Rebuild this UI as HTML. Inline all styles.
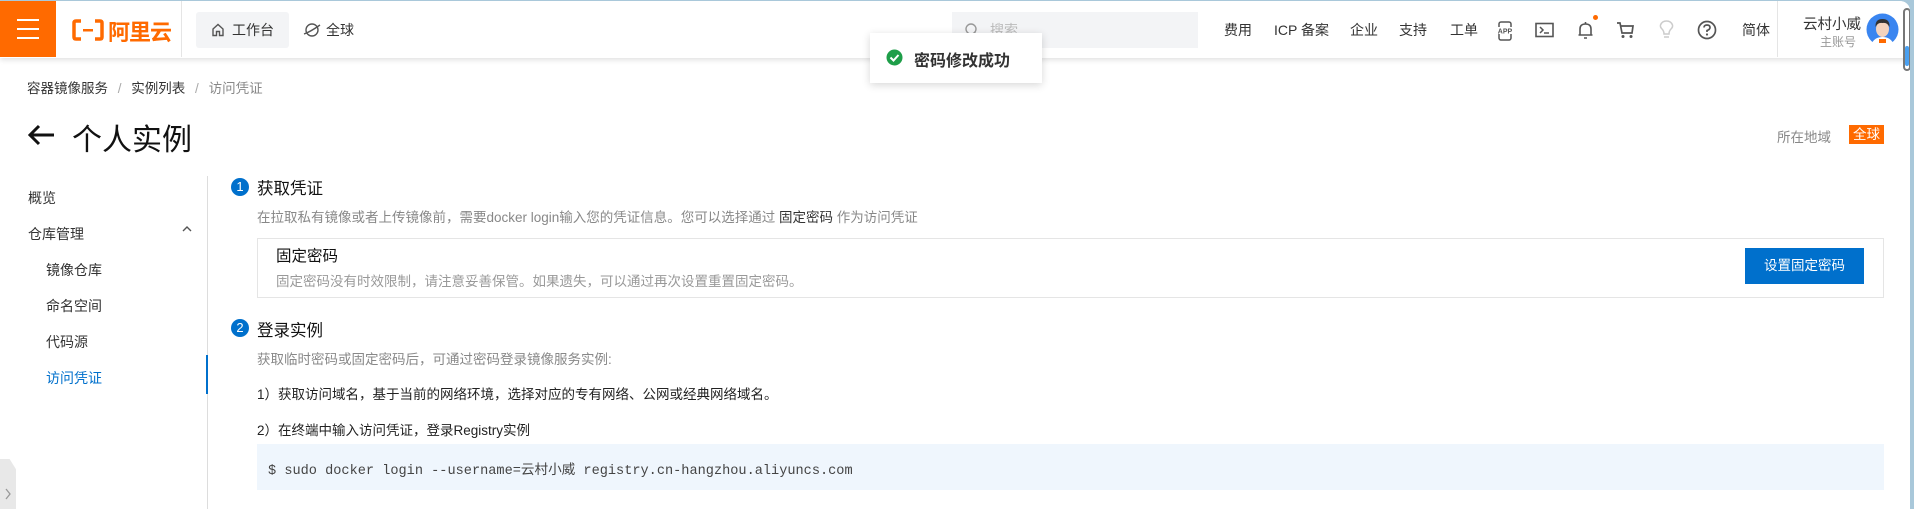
<!DOCTYPE html>
<html><head><meta charset="utf-8"><style>
*{margin:0;padding:0;box-sizing:border-box}
body{width:1914px;height:509px;overflow:hidden;background:#a9c8da;font-family:"Liberation Sans","Noto Sans CJK SC",sans-serif;color:#333;position:relative}
.win{position:absolute;left:0;top:1px;width:1910px;height:508px;background:#fff;border-top-right-radius:10px;overflow:hidden}
.a{position:absolute;white-space:nowrap}
.hdr{position:absolute;left:0;top:0;width:1910px;height:57px;background:#fff;box-shadow:0 2px 5px rgba(0,0,0,.12);z-index:2}
.nav{font-size:14px;color:#333;top:19px}
.side{font-size:14px;color:#333}
</style></head><body>
<div class="win">
<div class="hdr">
  <div class="a" style="left:0;top:0;width:56px;height:56px;background:#ff6a00"></div>
  <div class="a" style="left:17px;top:18px;width:22px;height:2px;background:#fff"></div>
  <div class="a" style="left:17px;top:27px;width:22px;height:2px;background:#fff"></div>
  <div class="a" style="left:17px;top:36px;width:22px;height:2px;background:#fff"></div>
  <svg class="a" style="left:72px;top:18px" width="32" height="22" viewBox="0 0 32 22"><path d="M9 2H4Q2 2 2 4V18Q2 20 4 20H9M23 2H28Q30 2 30 4V18Q30 20 28 20H23" stroke="#ff6a00" stroke-width="3.5" fill="none"/><rect x="11" y="10" width="10" height="2.5" fill="#ff6a00"/></svg>
  <div class="a" style="left:108px;top:14px;font-size:22px;font-weight:bold;color:#ff6a00;letter-spacing:-1px">阿里云</div>
  <div class="a" style="left:181px;top:0;width:1px;height:56px;background:#e5e5e5"></div>
  <div class="a" style="left:196px;top:11px;width:93px;height:36px;background:#f3f4f6;border-radius:3px"></div>
  <svg class="a" style="left:211px;top:22px" width="14" height="14" viewBox="0 0 14 14"><path d="M2 6L7 1.5 12 6V12.5H8.5V8.5H5.5V12.5H2Z" stroke="#555" stroke-width="1.4" fill="none"/></svg>
  <div class="a nav" style="left:232px">工作台</div>
  <svg class="a" style="left:302px;top:20px" width="20" height="18" viewBox="0 0 20 18"><circle cx="10" cy="9" r="6" stroke="#555" stroke-width="1.4" fill="none"/><path d="M2 13Q8 11 18 4" stroke="#555" stroke-width="1.4" fill="none"/></svg>
  <div class="a nav" style="left:326px">全球</div>
  <div class="a" style="left:952px;top:11px;width:246px;height:36px;background:#f3f4f6"></div>
  <svg class="a" style="left:964px;top:21px" width="16" height="16" viewBox="0 0 16 16"><circle cx="7" cy="7" r="5" stroke="#999" stroke-width="1.4" fill="none"/><path d="M11 11L14 14" stroke="#999" stroke-width="1.4"/></svg>
  <div class="a nav" style="left:990px;color:#bbb">搜索...</div>
  <div class="a nav" style="left:1224px">费用</div>
  <div class="a nav" style="left:1274px">ICP 备案</div>
  <div class="a nav" style="left:1350px">企业</div>
  <div class="a nav" style="left:1399px">支持</div>
  <div class="a nav" style="left:1450px">工单</div>
  <svg class="a" style="left:1496px;top:20px" width="18" height="20" viewBox="0 0 18 20"><rect x="3" y="1" width="12" height="18" rx="2" stroke="#555" stroke-width="1.5" fill="none"/><rect x="1" y="6" width="16" height="7" fill="#fff"/><text x="9" y="12.5" font-size="7" font-weight="bold" text-anchor="middle" fill="#555" font-family="Liberation Sans">APP</text></svg>
  <svg class="a" style="left:1535px;top:21px" width="19" height="16" viewBox="0 0 19 16"><rect x="1" y="1.5" width="17" height="13" stroke="#555" stroke-width="1.6" fill="none"/><path d="M5 5L8 8 5 11M9 11H14" stroke="#555" stroke-width="1.5" fill="none"/></svg>
  <svg class="a" style="left:1577px;top:19px" width="17" height="20" viewBox="0 0 17 20"><path d="M3 15V9Q3 4 8.5 4Q14 4 14 9V15ZM1.5 15H15.5M7 18H10M8.5 2V4" stroke="#555" stroke-width="1.6" fill="none"/></svg>
  <div class="a" style="left:1593px;top:14px;width:5px;height:5px;border-radius:50%;background:#ff6a00"></div>
  <svg class="a" style="left:1616px;top:20px" width="19" height="18" viewBox="0 0 19 18"><path d="M1 2H4L6 12H16L17 5H5" stroke="#555" stroke-width="1.7" fill="none"/><circle cx="7" cy="15.5" r="1.5" fill="#555"/><circle cx="15" cy="15.5" r="1.5" fill="#555"/></svg>
  <svg class="a" style="left:1659px;top:19px" width="15" height="20" viewBox="0 0 15 20"><path d="M5 14Q5 11 3 9Q1 7 1.5 5Q3 1 7.5 1Q12 1 13.5 5Q14 7 12 9Q10 11 10 14Z" stroke="#ccc" stroke-width="1.5" fill="none"/><path d="M5 17H10" stroke="#ccc" stroke-width="1.5"/></svg>
  <svg class="a" style="left:1697px;top:19px" width="20" height="20" viewBox="0 0 20 20"><circle cx="10" cy="10" r="8.5" stroke="#555" stroke-width="1.7" fill="none"/><path d="M7 7.5Q7 5 10 5Q13 5 13 7.5Q13 9.5 10 10.5V12" stroke="#555" stroke-width="1.7" fill="none"/><circle cx="10" cy="14.5" r="1.1" fill="#555"/></svg>
  <div class="a nav" style="left:1742px">简体</div>
  <div class="a" style="left:1777px;top:0;width:1px;height:56px;background:#e5e5e5"></div>
  <div class="a" style="left:1803px;top:12px;font-size:14.5px;color:#333">云村小威</div>
  <div class="a" style="left:1820px;top:32px;font-size:12px;color:#999">主账号</div>
  <svg class="a" style="left:1866px;top:12px" width="33" height="33" viewBox="0 0 33 33"><circle cx="16.5" cy="16.5" r="16" fill="#3a85f0"/><ellipse cx="16.5" cy="16" rx="6.5" ry="8" fill="#f4d3bd"/><path d="M9.5 14Q9 6 16.5 6Q24 6 23.5 14Q21 9 16.5 10Q12 9 9.5 14Z" fill="#333"/><path d="M6 30Q9 24 16.5 24Q24 24 27 30Q22 33 16.5 33Q11 33 6 30Z" fill="#fff"/><rect x="13" y="26" width="7" height="4" fill="#ff6a00"/></svg>
</div>
<!-- toast -->
<div class="a" style="left:870px;top:32px;width:172px;height:50px;background:#fff;box-shadow:0 2px 8px rgba(0,0,0,.16);z-index:3"></div>
<svg class="a" style="left:886px;top:48px;z-index:4" width="17" height="17" viewBox="0 0 17 17"><circle cx="8.5" cy="8.5" r="8" fill="#1e9e49"/><path d="M4.5 8.5L7.5 11.5 12.5 6" stroke="#fff" stroke-width="2" fill="none"/></svg>
<div class="a" style="left:914px;top:46px;font-size:16px;font-weight:bold;color:#333;z-index:4">密码修改成功</div>
<!-- breadcrumb -->
<div class="a" style="left:27px;top:76px;font-size:13.5px;color:#333">容器镜像服务 <span style="color:#aaa;margin:0 6px">/</span> 实例列表 <span style="color:#aaa;margin:0 6px">/</span> <span style="color:#888">访问凭证</span></div>
<svg class="a" style="left:27px;top:123px" width="29" height="22" viewBox="0 0 29 22"><path d="M27 11H3M12 2L3 11 12 20" stroke="#111" stroke-width="3" fill="none"/></svg>
<div class="a" style="left:72px;top:114px;font-size:30px;color:#111">个人实例</div>
<div class="a" style="left:1777px;top:125px;font-size:13.5px;color:#888">所在地域</div>
<div class="a" style="left:1849px;top:124px;width:35px;height:19px;background:#ff6a00;color:#fff;font-size:13.5px;text-align:center;line-height:19px">全球</div>
<!-- sidebar -->
<div class="a" style="left:207px;top:175px;width:1px;height:340px;background:#ddd"></div>
<div class="a" style="left:206px;top:354px;width:2px;height:39px;background:#0070cc"></div>
<div class="a side" style="left:28px;top:187px">概览</div>
<div class="a side" style="left:28px;top:223px">仓库管理</div>
<svg class="a" style="left:182px;top:224px" width="10" height="7" viewBox="0 0 10 7"><path d="M1 6L5 2 9 6" stroke="#555" stroke-width="1.4" fill="none"/></svg>
<div class="a side" style="left:46px;top:259px">镜像仓库</div>
<div class="a side" style="left:46px;top:295px">命名空间</div>
<div class="a side" style="left:46px;top:331px">代码源</div>
<div class="a side" style="left:46px;top:367px;color:#0070cc">访问凭证</div>
<div class="a" style="left:0;top:458px;width:16px;height:51px;background:#e8e8e8;clip-path:polygon(0 0,60% 0,100% 20%,100% 100%,0 100%)"></div>
<svg class="a" style="left:4px;top:486px" width="8" height="14" viewBox="0 0 8 14"><path d="M2 2L6 7 2 12" stroke="#999" stroke-width="1.3" fill="none"/></svg>
<!-- content -->
<div class="a" style="left:231px;top:177px;width:18px;height:18px;border-radius:50%;background:#0070cc;color:#fff;font-size:13px;text-align:center;line-height:18px">1</div>
<div class="a" style="left:257px;top:174px;font-size:16.5px;color:#111">获取凭证</div>
<div class="a" style="left:257px;top:205px;font-size:13.5px;color:#888">在拉取私有镜像或者上传镜像前，需要docker login输入您的凭证信息。您可以选择通过 <span style="color:#333">固定密码</span> 作为访问凭证</div>
<div class="a" style="left:257px;top:237px;width:1627px;height:60px;border:1px solid #e5e5e5"></div>
<div class="a" style="left:276px;top:243px;font-size:15.5px;color:#111">固定密码</div>
<div class="a" style="left:276px;top:269px;font-size:13.5px;color:#999">固定密码没有时效限制，请注意妥善保管。如果遗失，可以通过再次设置重置固定密码。</div>
<div class="a" style="left:1745px;top:247px;width:119px;height:36px;background:#0070cc;color:#fff;font-size:13.5px;text-align:center;line-height:36px">设置固定密码</div>
<div class="a" style="left:231px;top:318px;width:18px;height:18px;border-radius:50%;background:#0070cc;color:#fff;font-size:13px;text-align:center;line-height:18px">2</div>
<div class="a" style="left:257px;top:316px;font-size:16.5px;color:#111">登录实例</div>
<div class="a" style="left:257px;top:347px;font-size:13.5px;color:#888">获取临时密码或固定密码后，可通过密码登录镜像服务实例:</div>
<div class="a" style="left:257px;top:382px;font-size:13.5px;color:#222">1）获取访问域名，基于当前的网络环境，选择对应的专有网络、公网或经典网络域名。</div>
<div class="a" style="left:257px;top:418px;font-size:13.5px;color:#222">2）在终端中输入访问凭证，登录Registry实例</div>
<div class="a" style="left:257px;top:443px;width:1627px;height:46px;background:#eff6fd"></div>
<div class="a" style="left:268px;top:457px;font-family:'Liberation Mono','Noto Sans CJK SC',monospace;font-size:13.6px;color:#444">$ sudo docker login --username=云村小威 registry.cn-hangzhou.aliyuncs.com</div>
<!-- scrollbar -->
<div class="a" style="left:1903px;top:7px;width:8px;height:63px;border:2px solid #777;border-radius:4px;background:#fff;z-index:5"></div>
<div class="a" style="left:1905px;top:45px;width:4px;height:20px;background:#4aa0f0;border-radius:2px;z-index:6"></div>
</div>
</body></html>
